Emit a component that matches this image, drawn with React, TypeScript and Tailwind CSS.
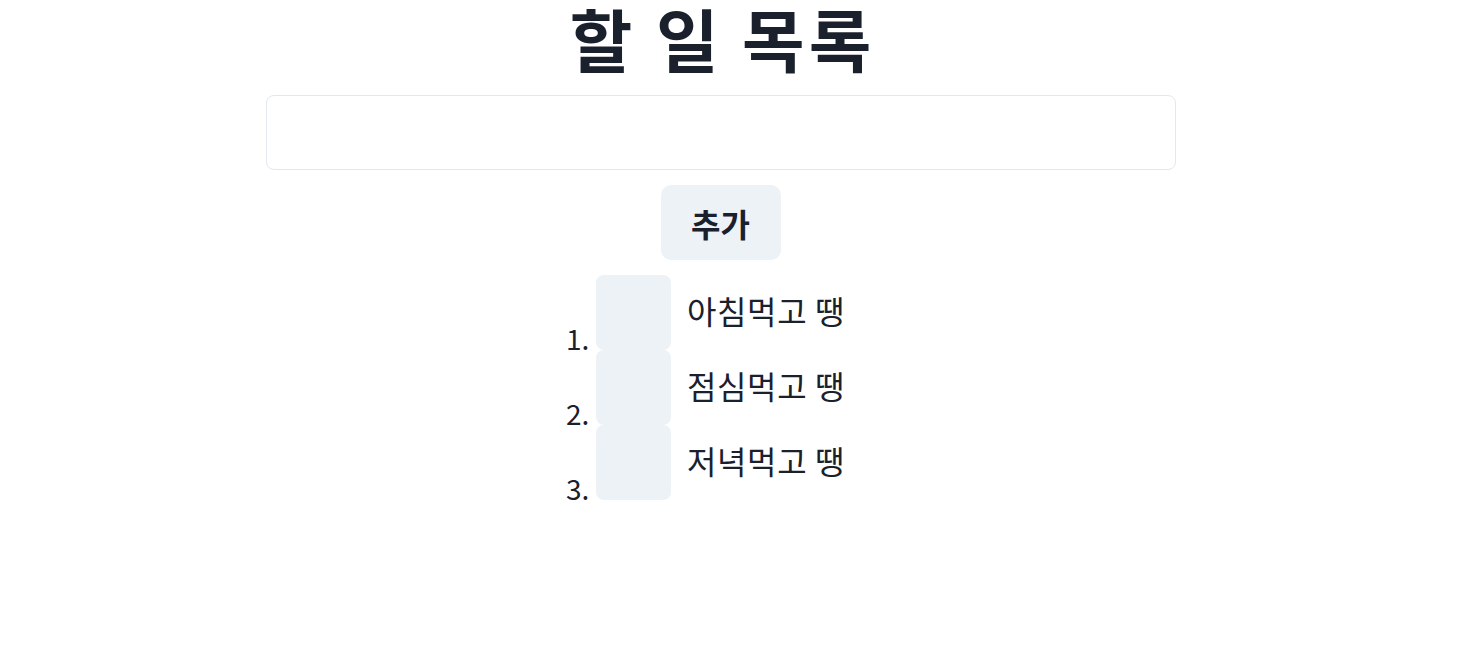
import React, { useState } from 'react';

export default function App() {
  const [todos] = useState(['아침먹고 땡', '점심먹고 땡', '저녁먹고 땡']);
  const [text, setText] = useState('');

  return (
    <div className="min-h-screen bg-white pr-[17px] text-[#1A202C] font-['Noto_Sans_CJK_KR','Noto_Sans',sans-serif]">
      <div className="flex flex-col items-center">
        <h1 className="text-[68px] font-bold leading-[76px] tracking-[0.06em] pl-[0.06em]">할 일 목록</h1>
        <input
          value={text}
          onChange={(e) => setText(e.target.value)}
          className="mt-[19px] w-[910px] h-[75px] rounded-lg border border-[#E2E8F0] px-4 text-[30px] outline-none"
        />
        <button className="mt-[15px] w-[120px] h-[75px] rounded-[10px] bg-[#EDF2F7] text-[32px] font-bold">
          추가
        </button>
        <ol className="mt-[15px] flex flex-col pr-[30px]">
          {todos.map((t, i) => (
            <li key={t} className="flex">
              <span className="self-end w-[30px] text-[28px] leading-none mb-[-2px]">{i + 1}.</span>
              <button className="w-[75px] h-[75px] rounded-lg bg-[#EDF2F7]" />
              <span className="ml-4 mt-[13px] text-[32px] leading-[44px] tracking-[0.02em]">{t}</span>
            </li>
          ))}
        </ol>
      </div>
    </div>
  );
}
